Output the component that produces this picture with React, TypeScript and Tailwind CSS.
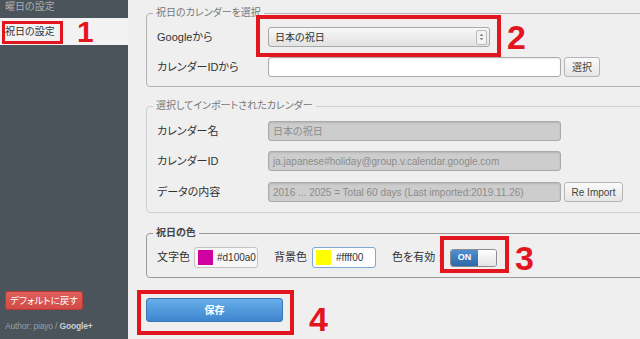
function Row({ label, children }: { label: string; children: React.ReactNode }) {
  return (
    <div className="flex h-[20px] items-center">
      <span className="w-[111px] shrink-0 text-[11px] text-[#333]">{label}</span>
      {children}
    </div>
  );
}

function DisabledInput({ value }: { value: string }) {
  return (
    <div className="flex h-[20px] w-[293px] items-center overflow-hidden whitespace-nowrap rounded-[3px] border border-[#aaa] bg-[#cdcdcd] px-[4px] text-[10px] text-[#8c8c8c] shadow-[inset_0_1px_2px_rgba(0,0,0,0.12)]">
      {value}
    </div>
  );
}

function SmallButton({ label, w }: { label: string; w: string }) {
  return (
    <button
      className={`ml-[3px] flex h-[20px] ${w} items-center justify-center rounded-[3px] border border-[#b5b5b5] bg-gradient-to-b from-[#fafafa] to-[#e6e6e6] text-[10px] text-[#444]`}
    >
      {label}
    </button>
  );
}

function Num({ n, className }: { n: string; className: string }) {
  return (
    <span
      className={`absolute font-['Liberation_Sans',Arial,sans-serif] leading-none font-bold text-[#e3161f] ${className}`}
    >
      {n}
    </span>
  );
}

export default function App() {
  return (
    <div className="relative flex h-[339px] w-[640px] overflow-hidden bg-[#efefef] font-['Liberation_Sans','Noto_Sans_CJK_JP',sans-serif] [font-feature-settings:'palt']">
      {/* sidebar */}
      <aside className="flex w-[128px] shrink-0 flex-col bg-[#4b535b]">
        <div className="h-[18px] pl-[5px] text-[10px] leading-[14px] text-[#a9b0b7]">曜日の設定</div>
        <div className="flex h-[27px] items-center bg-[#f2f2f2] pl-[5px] text-[10px] text-[#333]">祝日の設定</div>
        <div className="flex-1" />
        <div className="px-[5px] pb-[6px]">
          <button className="flex h-[19px] w-[78px] items-center justify-center whitespace-nowrap rounded-[3px] border border-[#b83a36] bg-gradient-to-b from-[#df5f5b] to-[#d24a46] text-[9.5px] text-white">
            デフォルトに戻す
          </button>
          <div className="mt-[10px] whitespace-nowrap text-[8.5px] tracking-[-0.02em] text-[#98a0a8]">
            Author: piayo / <span className="font-bold text-[#c9ced3]">Google+</span>
          </div>
        </div>
      </aside>

      {/* main */}
      <main className="flex-1 overflow-hidden pl-[18px] pt-[6px]">
        <fieldset className="w-[520px] rounded-[4px] border border-[#b4b4b4] px-[10px] pb-[9px]">
          <legend className="ml-[-4px] px-[3px] text-[10px] leading-[14px] text-[#777]">祝日のカレンダーを選択</legend>
          <div className="flex flex-col gap-[10px] pt-[7px]">
            <Row label="Googleから">
              <div className="flex h-[20px] w-[222px] items-center justify-between rounded-[3px] border border-[#aaa] bg-gradient-to-b from-[#f8f8f8] to-[#e2e2e2] pl-[6px] pr-[2px] text-[10px] text-[#333]">
                <span>日本の祝日</span>
                <span className="flex h-[15px] w-[11px] items-center justify-center rounded-[2px] border border-[#bbb] bg-[#f4f4f4]">
                  <svg width="5" height="8" viewBox="0 0 5 8">
                    <path d="M0.5 3 L2.5 0.8 L4.5 3 Z M0.5 5 L2.5 7.2 L4.5 5 Z" fill="#888" />
                  </svg>
                </span>
              </div>
            </Row>
            <Row label="カレンダーIDから">
              <div className="h-[20px] w-[293px] rounded-[3px] border border-[#aaa] bg-white shadow-[inset_0_1px_2px_rgba(0,0,0,0.08)]" />
              <SmallButton label="選択" w="w-[36px]" />
            </Row>
          </div>
        </fieldset>

        <fieldset className="mt-[12px] w-[520px] rounded-[4px] border border-[#cfcfcf] px-[10px] pb-[10px]">
          <legend className="ml-[-4px] px-[3px] text-[10px] leading-[14px] text-[#777]">選択してインポートされたカレンダー</legend>
          <div className="flex flex-col gap-[10px] pt-[8px]">
            <Row label="カレンダー名">
              <DisabledInput value="日本の祝日" />
            </Row>
            <Row label="カレンダーID">
              <DisabledInput value="ja.japanese#holiday@group.v.calendar.google.com" />
            </Row>
            <div className="mt-[1px]">
              <Row label="データの内容">
                <DisabledInput value="2016 ... 2025 = Total 60 days (Last imported:2019.11.26)" />
                <SmallButton label="Re Import" w="w-[59px]" />
              </Row>
            </div>
          </div>
        </fieldset>

        <fieldset className="mt-[13px] w-[520px] rounded-[4px] border border-[#999] px-[10px] pb-[9px]">
          <legend className="ml-[-4px] px-[3px] text-[10px] leading-[14px] font-bold text-[#444]">祝日の色</legend>
          <div className="mt-[7px] flex h-[21px] items-center text-[11px] text-[#333]">
            <span className="w-[37px] shrink-0">文字色</span>
            <div className="flex h-[21px] w-[64px] shrink-0 items-center rounded-[3px] border border-[#c4c4c4] bg-[#f7f7f7] pl-[3px]">
              <span className="h-[15px] w-[15px] bg-[#d100a0]" />
              <span className="ml-[4px] text-[10px] text-[#333]">#d100a0</span>
            </div>
            <span className="ml-[16px] w-[38px] shrink-0">背景色</span>
            <div className="flex h-[21px] w-[64px] shrink-0 items-center rounded-[3px] border border-[#7fa6d6] bg-white pl-[3px]">
              <span className="h-[15px] w-[15px] bg-[#ffff00]" />
              <span className="ml-[5px] text-[10px] text-[#333]">#ffff00</span>
            </div>
            <span className="ml-[16px] w-[46px] shrink-0">色を有効</span>
            <span className="w-[12px] shrink-0 text-[#bbb]">:</span>
            <div className="flex h-[18px] w-[47px] shrink-0 overflow-hidden rounded-[3px] border border-[#8c8c8c]">
              <span className="flex w-[27px] items-center justify-center bg-gradient-to-b from-[#4f8fd0] to-[#2c68aa] text-[9px] font-bold text-white">
                ON
              </span>
              <span className="flex-1 bg-gradient-to-b from-[#ffffff] to-[#e4e4e4]" />
            </div>
          </div>
        </fieldset>

        <button className="mt-[20px] flex h-[24px] w-[137px] items-center justify-center rounded-[3px] border border-[#3a75b5] bg-gradient-to-b from-[#67aeea] to-[#3f86d0] text-[10px] font-bold text-white">
          保存
        </button>
      </main>

      {/* annotations */}
      <div className="absolute left-[2px] top-[21px] h-[23px] w-[61px] border-[3px] border-[#e3161f]" />
      <Num n="1" className="left-[77px] top-[17px] text-[30px]" />
      <div className="absolute left-[256px] top-[15px] h-[42px] w-[245px] border-[4px] border-[#e3161f]" />
      <Num n="2" className="left-[507px] top-[20px] text-[34px]" />
      <div className="absolute left-[440px] top-[236px] h-[37px] w-[69px] border-[4px] border-[#e3161f]" />
      <Num n="3" className="left-[515px] top-[241px] text-[34px]" />
      <div className="absolute left-[137px] top-[290px] h-[45px] w-[157px] border-[4px] border-[#e3161f]" />
      <Num n="4" className="left-[309px] top-[302px] text-[34px]" />
    </div>
  );
}
